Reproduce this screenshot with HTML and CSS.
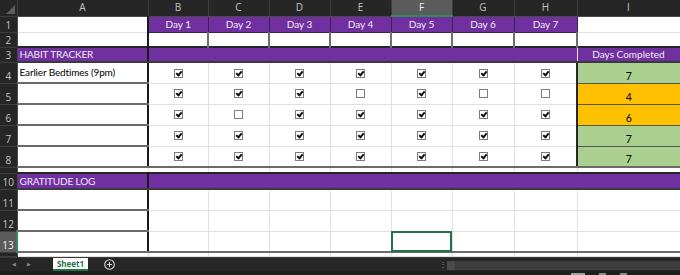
FILE: index.html
```html
<!DOCTYPE html>
<html lang="en">
<head>
  <meta charset="UTF-8" />
  <title>Habit Tracker</title>
  <link rel="stylesheet" href="styles.css">
</head>
<body>
  <table class="planilha">
    <colgroup>
      <col class="c-rh"><col class="c-a"><col class="c-b"><col class="c-c"><col class="c-d"><col class="c-e"><col class="c-f"><col class="c-g"><col class="c-h"><col class="c-i">
    </colgroup>
    <tr class="r-head">
      <th class="canto"><span class="tri"></span></th>
      <th class="col">A</th><th class="col">B</th><th class="col">C</th><th class="col">D</th>
      <th class="col">E</th><th class="col sel">F</th><th class="col">G</th><th class="col">H</th><th class="col">I</th>
    </tr>
    <tr class="r-16">
      <th class="lin">1</th>
      <td class="a"></td>
      <td class="dia">Day 1</td><td class="dia">Day 2</td><td class="dia">Day 3</td><td class="dia">Day 4</td>
      <td class="dia">Day 5</td><td class="dia">Day 6</td><td class="dia">Day 7</td>
      <td></td>
    </tr>
    <tr class="r-15">
      <th class="lin">2</th>
      <td class="a"></td>
      <td class="vazio"></td><td class="vazio"></td><td class="vazio"></td><td class="vazio"></td>
      <td class="vazio"></td><td class="vazio"></td><td class="vazio"></td>
      <td></td>
    </tr>
    <tr class="r-15 titulo">
      <th class="lin">3</th>
      <td class="a roxo">HABIT TRACKER</td>
      <td class="roxo" colspan="7"></td>
      <td class="roxo centro">Days Completed</td>
    </tr>
    <tr class="r-21">
      <th class="lin">4</th>
      <td class="a caixa">Earlier Bedtimes (9pm)</td>
      <td class="ck"><span class="cb on"></span></td><td class="ck"><span class="cb on"></span></td><td class="ck"><span class="cb on"></span></td><td class="ck"><span class="cb on"></span></td>
      <td class="ck"><span class="cb on"></span></td><td class="ck"><span class="cb on"></span></td><td class="ck ult"><span class="cb on"></span></td>
      <td class="total verde">7</td>
    </tr>
    <tr class="r-21">
      <th class="lin">5</th>
      <td class="a caixa"></td>
      <td class="ck"><span class="cb on"></span></td><td class="ck"><span class="cb on"></span></td><td class="ck"><span class="cb on"></span></td><td class="ck"><span class="cb"></span></td>
      <td class="ck"><span class="cb on"></span></td><td class="ck"><span class="cb"></span></td><td class="ck ult"><span class="cb"></span></td>
      <td class="total laranja">4</td>
    </tr>
    <tr class="r-21">
      <th class="lin">6</th>
      <td class="a caixa"></td>
      <td class="ck"><span class="cb on"></span></td><td class="ck"><span class="cb"></span></td><td class="ck"><span class="cb on"></span></td><td class="ck"><span class="cb on"></span></td>
      <td class="ck"><span class="cb on"></span></td><td class="ck"><span class="cb on"></span></td><td class="ck ult"><span class="cb on"></span></td>
      <td class="total laranja">6</td>
    </tr>
    <tr class="r-21">
      <th class="lin">7</th>
      <td class="a caixa"></td>
      <td class="ck"><span class="cb on"></span></td><td class="ck"><span class="cb on"></span></td><td class="ck"><span class="cb on"></span></td><td class="ck"><span class="cb on"></span></td>
      <td class="ck"><span class="cb on"></span></td><td class="ck"><span class="cb on"></span></td><td class="ck ult"><span class="cb on"></span></td>
      <td class="total verde">7</td>
    </tr>
    <tr class="r-21 fim">
      <th class="lin">8</th>
      <td class="a caixa"></td>
      <td class="ck"><span class="cb on"></span></td><td class="ck"><span class="cb on"></span></td><td class="ck"><span class="cb on"></span></td><td class="ck"><span class="cb on"></span></td>
      <td class="ck"><span class="cb on"></span></td><td class="ck"><span class="cb on"></span></td><td class="ck ult"><span class="cb on"></span></td>
      <td class="total verde">7</td>
    </tr>
    <tr class="r-6">
      <th class="lin"></th>
      <td></td><td></td><td></td><td></td><td></td><td></td><td></td><td></td><td></td>
    </tr>
    <tr class="r-16 titulo">
      <th class="lin">10</th>
      <td class="a roxo">GRATITUDE LOG</td>
      <td class="roxo" colspan="8"></td>
    </tr>
    <tr class="r-21">
      <th class="lin">11</th>
      <td class="a caixa"></td>
      <td></td><td></td><td></td><td></td><td></td><td></td><td></td><td></td>
    </tr>
    <tr class="r-21">
      <th class="lin">12</th>
      <td class="a caixa"></td>
      <td></td><td></td><td></td><td></td><td></td><td></td><td></td><td></td>
    </tr>
    <tr class="r-21 fim">
      <th class="lin sel">13</th>
      <td class="a caixa"></td>
      <td></td><td></td><td></td><td></td><td class="ativa"></td><td></td><td></td><td></td>
    </tr>
    <tr class="r-4">
      <th class="lin"></th>
      <td></td><td></td><td></td><td></td><td></td><td></td><td></td><td></td><td></td>
    </tr>
  </table>

  <div class="abas">
    <span class="seta">&#9664;</span>
    <span class="seta">&#9654;</span>
    <span class="aba">Sheet1</span>
    <span class="mais">
      <svg width="11" height="11" viewBox="0 0 11 11">
        <circle cx="5.5" cy="5.5" r="4.8" fill="none" stroke="#d6d6d6" stroke-width="1.1"/>
        <path d="M5.5 3v5M3 5.5h5" stroke="#d6d6d6" stroke-width="1.1"/>
      </svg>
    </span>
    <span class="espaco"></span>
    <span class="pontos">&#8942;</span>
    <span class="rolagem"><span class="rol-seta"></span></span>
  </div>
  <div class="status">
    <span class="st st1"></span><span class="st"></span><span class="st"></span>
  </div>
</body>
</html>
```

FILE: styles.css
```css
* {
  box-sizing: border-box;
}
body {
  margin: 0;
  background-color: #1f1f1f;
  font-family: 'Lato', 'Liberation Sans', sans-serif;
  overflow: hidden;
}

/* Planilha */
.planilha {
  width: 680px;
  table-layout: fixed;
  border-collapse: collapse;
  font-size: 10px;
  color: #000;
}
.c-rh { width: 17px; }
.c-a { width: 131px; }
.c-b { width: 60px; }
.c-c, .c-d, .c-e, .c-f { width: 61px; }
.c-g { width: 62px; }
.c-h { width: 63px; }
.c-i { width: 103px; }

.r-head { height: 16px; }
.r-16 { height: 16px; }
.r-15 { height: 15px; }
.r-21 { height: 21px; }
.r-6 { height: 6px; }
.r-4 { height: 4px; }

.planilha td {
  background-color: #fff;
  border: 1px solid #e1e1e1;
  padding: 0 2px;
  line-height: 11px;
  white-space: nowrap;
  overflow: hidden;
}

/* Cabecalhos */
.planilha th {
  background-color: #262626;
  color: #c4c4c4;
  font-family: 'Open Sans', 'Liberation Sans', sans-serif;
  font-weight: normal;
  font-size: 10px;
  line-height: 11px;
  padding: 0;
  overflow: hidden;
}
.canto {
  position: relative;
  border-right: 1px solid #3e3e3e;
  border-bottom: 1px solid #3e3e3e;
}
.tri {
  position: absolute;
  right: 2px;
  bottom: 2px;
  width: 0;
  height: 0;
  border-left: 9px solid transparent;
  border-bottom: 9px solid #5e5e5e;
}
.col {
  border-right: 1px solid #3e3e3e;
  border-bottom: 1px solid #4a4a4a;
}
.col.sel {
  background-color: #5c5c5c;
  color: #f0f0f0;
  border-bottom: 2px solid #2e8b57;
}
.planilha th.lin {
  border-bottom: 1px solid #3e3e3e;
  border-right: 1px solid #4a4a4a;
  vertical-align: bottom;
  padding-bottom: 1px;
}
.planilha th.lin.sel {
  background-color: #5c5c5c;
  color: #f0f0f0;
  border-right: 2px solid #2e8b57;
}

/* Linhas roxas */
.planilha td.dia {
  background-color: #7030a0;
  color: #f2eaf7;
  text-align: center;
  border: 1px solid #3a2550;
}
.planilha td.vazio {
  border-left: 2px solid #6e6e6e;
  border-right: 2px solid #6e6e6e;
}
.planilha td.roxo {
  background-color: #7030a0;
  color: #f2eaf7;
}
.centro {
  text-align: center;
}
.planilha .titulo td {
  border-top: 2px solid #262626;
  border-bottom: 2px solid #3a3a3a;
}

/* Coluna A */
.planilha td.a {
  border-right: 2px solid #1a1a1a;
  letter-spacing: -0.15px;
}
.planilha td.caixa {
  border-bottom: 2px solid #6b6b6b;
}

/* Checkboxes */
.ck {
  text-align: center;
}
.planilha td.ult {
  border-right: 2px solid #262626;
}
.cb {
  display: inline-block;
  position: relative;
  width: 9px;
  height: 9px;
  border: 1px solid #7d7d7d;
  background-color: #fff;
  vertical-align: middle;
  margin-top: -1px;
}
.cb.on::after {
  content: '';
  position: absolute;
  left: 2px;
  top: 0;
  width: 2px;
  height: 4px;
  border: solid #111;
  border-width: 0 2px 2px 0;
  transform: rotate(40deg);
}

/* Dias completados */
.planilha td.total {
  text-align: center;
  vertical-align: bottom;
  line-height: 14px;
  font-size: 10.5px;
  border: 1px solid #555;
  border-left: 2px solid #262626;
}
.planilha td.verde { background-color: #a9d08e; }
.planilha td.laranja { background-color: #ffc000; }

.planilha .fim td {
  border-bottom: 2px solid #6b6b6b;
}
.ativa {
  outline: 2px solid #217346;
  outline-offset: -2px;
}

/* Barra das abas */
.abas {
  display: flex;
  align-items: stretch;
  height: 14px;
  background-color: #262626;
  border-top: 1px solid #3a3a3a;
}
.seta {
  width: 15px;
  color: #8a8a8a;
  font-size: 5px;
  display: flex;
  align-items: center;
  justify-content: center;
}
.seta:first-child {
  margin-left: 6px;
}
.aba {
  margin-left: 17px;
  width: 35px;
  background-color: #fff;
  color: #217346;
  font-family: 'Open Sans', 'Liberation Sans', sans-serif;
  font-weight: bold;
  font-size: 8px;
  display: flex;
  align-items: center;
  justify-content: center;
  border-bottom: 2px solid #217346;
}
.mais {
  margin-left: 16px;
  display: flex;
  align-items: center;
}
.espaco {
  flex: 1;
}
.pontos {
  color: #9a9a9a;
  font-size: 8px;
  line-height: 13px;
  width: 9px;
  text-align: center;
}
.rolagem {
  width: 233px;
  margin: 3px 0 1px;
  background-color: #3d3d3d;
  display: flex;
}
.rol-seta {
  width: 8px;
  background-color: #4a4a4a;
}

/* Status */
.status {
  height: 5px;
  background-color: #1f1f1f;
  display: flex;
  justify-content: flex-end;
  gap: 14px;
  padding: 2px 53px 0 0;
}
.st {
  width: 7px;
  height: 3px;
  background-color: #8a8a8a;
}
.st1 {
  width: 14px;
  background-color: #a0a0a0;
}
```
